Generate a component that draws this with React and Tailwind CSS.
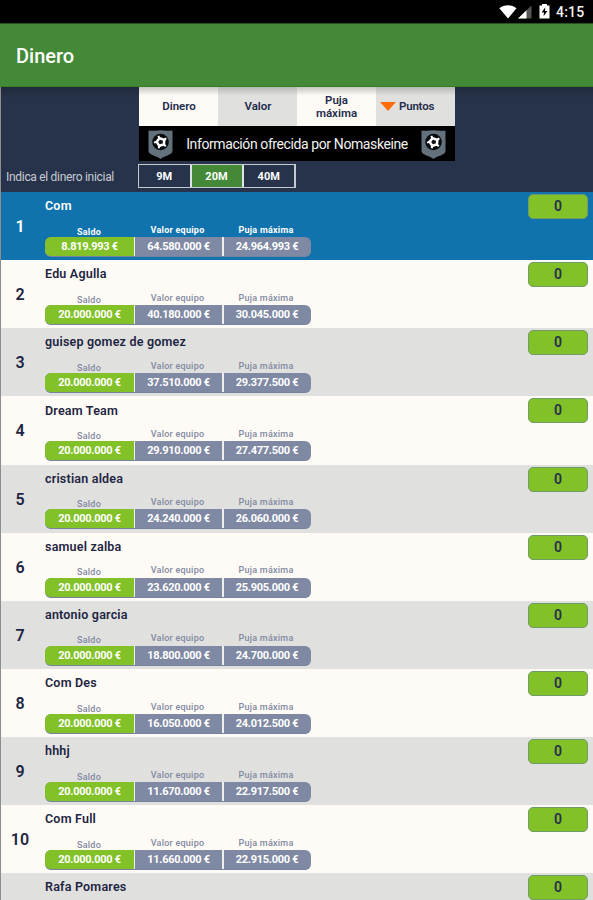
const rows = [
  ['Com', '8.819.993 €', '64.580.000 €', '24.964.993 €'],
  ['Edu Agulla', '20.000.000 €', '40.180.000 €', '30.045.000 €'],
  ['guisep gomez de gomez', '20.000.000 €', '37.510.000 €', '29.377.500 €'],
  ['Dream Team', '20.000.000 €', '29.910.000 €', '27.477.500 €'],
  ['cristian aldea', '20.000.000 €', '24.240.000 €', '26.060.000 €'],
  ['samuel zalba', '20.000.000 €', '23.620.000 €', '25.905.000 €'],
  ['antonio garcia', '20.000.000 €', '18.800.000 €', '24.700.000 €'],
  ['Com Des', '20.000.000 €', '16.050.000 €', '24.012.500 €'],
  ['hhhj', '20.000.000 €', '11.670.000 €', '22.917.500 €'],
  ['Com Full', '20.000.000 €', '11.660.000 €', '22.915.000 €'],
];

function StatusBar() {
  return (
    <div className="flex h-[23px] shrink-0 items-center justify-end bg-black pr-[8px] text-[#f2f2f2]">
      <svg className="h-[14px] w-[18px]" viewBox="0 0 18 14">
        <path d="M0.300 3.200C5 -0.700 13 -0.700 17.500 3.200L9 13.600Z" fill="#fff" />
      </svg>
      <svg className="ml-[1px] h-[14px] w-[14px]" viewBox="0 0 14 14">
        <path d="M0 13.500L13.500 0.500V13.500Z" fill="#555" />
        <path d="M0 13.500L8.500 5.300V13.500Z" fill="#fff" />
      </svg>
      <svg className="ml-[7px] h-[15px] w-[11px]" viewBox="0 0 11 15">
        <path d="M3 0h5v1.500h2.500v13H.5V1.500H3Z" fill="#fff" />
        <path d="M6.300 3.200L2.700 8.400H5L4.600 12.200L8.400 7H6Z" fill="#000" />
      </svg>
      <span className="ml-[6px] mt-[1px] w-[29px] whitespace-nowrap text-[14px] font-medium leading-none tracking-[0.200px]">4:15</span>
    </div>
  );
}

function Shield() {
  return (
    <svg className="h-[30px] w-[25px] shrink-0" viewBox="0 0 25 30">
      <path d="M.5 1.500Q6.500 2 12.500 1.300Q18.500 2 24.500 1.500V22C24.500 26 17 26.500 12.500 30C8 26.500.5 26 .5 22Z" fill="#62717b" />
      <circle cx="12.500" cy="13" r="8.300" fill="#090c0e" />
      <path d="M11.500 9.200L16.300 10.800L15.900 15.500L11.300 16.800L8.600 12.900Z" fill="#101417" stroke="#fff" strokeWidth="2.500" strokeLinejoin="miter" />
      <path d="M11.300 9L10.300 6.800M16.500 10.600L18.300 9.200M16.100 15.700L17.800 17.200M11.200 17L10.700 19.200M8.400 12.900L6 13.600" stroke="#fff" strokeWidth="2" />
    </svg>
  );
}

function Header() {
  return (
    <div className="flex h-[105px] shrink-0 flex-col bg-[#27324b] bg-gradient-to-b from-[#20293d] to-[#27324b] to-[10%]">
      <div className="ml-[138px] grid h-[39px] w-[316px] shrink-0 grid-cols-4 text-center text-[11.500px] font-semibold leading-[13px] text-[#252c4d]">
        <div className="flex items-center justify-center bg-gradient-to-b from-[#c8c6c3] to-[#fefaf5] to-[22%] pl-[1px]">Dinero</div>
        <div className="flex items-center justify-center bg-gradient-to-b from-[#b8b8b8] to-[#e0e0df] to-[22%] pl-[1px]">Valor</div>
        <div className="flex items-center justify-center bg-gradient-to-b from-[#c8c6c3] to-[#fefaf5] to-[22%]">Puja<br />máxima</div>
        <div className="flex items-center bg-gradient-to-b from-[#b8b8b8] to-[#e0e0df] to-[22%] pl-[4px]">
          <svg className="h-[9px] w-[16px]" viewBox="0 0 16 9"><path d="M0 0H16L8 9Z" fill="#ff6a0b" /></svg>
          <span className="ml-[3px] tracking-[-0.200px]">Puntos</span>
        </div>
      </div>
      <div className="ml-[138px] flex h-[35px] w-[316px] shrink-0 items-center justify-between bg-black px-[9px]">
        <Shield />
        <span className="whitespace-nowrap text-[14px] leading-none tracking-[-0.400px] text-[#f2f2f2]">Información ofrecida por Nomaskeine</span>
        <Shield />
      </div>
      <div className="mt-[3px] flex h-[24px] items-center">
        <span className="mt-[2px] w-[137px] whitespace-nowrap pl-[5px] text-[12px] leading-none tracking-[-0.300px] text-[#c8ccd2]">Indica el dinero inicial</span>
        <div className="flex h-[24px] w-[158px] border border-r-2 border-[#c4c8cf] text-[11px] font-bold text-white">
          <span className="flex flex-1 items-center justify-center pt-[3px]">9M</span>
          <span className="flex w-[54px] items-center justify-center border-x-2 border-[#dfe2e7] bg-[#438937] pt-[3px]">20M</span>
          <span className="flex flex-1 items-center justify-center pt-[3px]">40M</span>
        </div>
      </div>
    </div>
  );
}

function PlayerName({ children }) {
  return <div className="h-[16px] whitespace-nowrap text-[12.500px] font-semibold leading-[16px] tracking-[0.200px]">{children}</div>;
}

function ScoreBadge() {
  return <div className="ml-auto mr-[5px] mt-[2px] flex h-[25px] w-[60px] shrink-0 items-center justify-center rounded-[5px] border border-[#719b69] bg-[#82c127] text-[14px] font-semibold text-[#26314c]">0</div>;
}

function Row({ row, index }) {
  const active = index === 0;
  const background = active ? 'bg-[#1073ae]' : index % 2 ? 'bg-[#fefaf5]' : 'bg-[#e0e0df]';
  return (
    <div className={`flex h-[68.130px] shrink-0 ${background} ${active ? 'text-white' : 'text-[#1d2542]'}`}>
      <div className="flex w-[44px] shrink-0 items-center justify-center pr-[6px] pt-[2px] text-[16px] font-semibold">{index + 1}</div>
      <div className="w-[266px] shrink-0 pt-[6.200px]">
        <PlayerName>{row[0]}</PlayerName>
        <div className={`mt-[9.500px] grid h-[13.300px] grid-cols-[88px_89px_89px] text-center text-[9px] leading-[12px] tracking-[0.250px] ${active ? 'font-bold text-white' : 'font-medium text-[#8289a2]'}`}>
          <span className="pt-[2px]">Saldo</span><span>Valor equipo</span><span className="pr-[1px]">Puja máxima</span>
        </div>
        <div className="grid h-[20px] grid-cols-[90px_89px_87px] overflow-hidden rounded-[6px] border-b border-[#76829e] bg-[#8089a3] text-center text-[11px] font-bold leading-[19px] tracking-[-0.300px] text-white">
          <span className="border-r border-[#eff0ee] bg-[#82c127]">{row[1]}</span><span className="border-r-2 border-[#eff0ee]">{row[2]}</span><span className="pr-[1px]">{row[3]}</span>
        </div>
      </div>
      <ScoreBadge />
    </div>
  );
}

export default function App() {
  return (
    <div className="flex h-[900px] w-[593px] flex-col overflow-hidden bg-[#e0e0df] font-['Roboto',sans-serif]">
      <StatusBar />
      <div className="flex h-[64px] shrink-0 items-center border-b border-t border-b-[#348021] border-t-[#285321] bg-[#438937] pl-[16px] pt-[1px] text-[20px] font-medium text-white">Dinero</div>
      <div className="flex min-h-0 flex-1 flex-col border-l border-[#8b8d91]">
        <Header />
        {rows.map((row, index) => <Row key={row[0]} row={row} index={index} />)}
        <div className="flex flex-1 bg-[#e0e0df] pl-[44px] text-[#1d2542]">
          <div className="pt-[6px]"><PlayerName>Rafa Pomares</PlayerName></div>
          <ScoreBadge />
        </div>
      </div>
    </div>
  );
}
